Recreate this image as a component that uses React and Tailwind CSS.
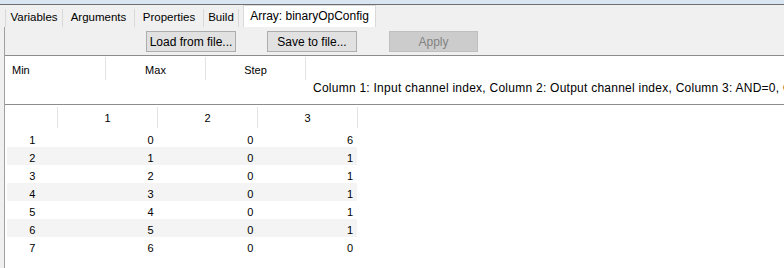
import React from 'react';

const tabs = [
    { label: 'Variables', w: 'w-[57px]' },
    { label: 'Arguments', w: 'w-[72px]' },
    { label: 'Properties', w: 'w-[69px]' },
    { label: 'Build', w: 'w-[35px]' },
];

const rows = [
    [0, 0, 6],
    [1, 0, 1],
    [2, 0, 1],
    [3, 0, 1],
    [4, 0, 1],
    [5, 0, 1],
    [6, 0, 0],
];

const App = () => {
    return (
        <div className="w-[784px] h-[268px] overflow-hidden bg-[#f0f0f0] text-[11px] text-black font-['Liberation_Sans',Arial,sans-serif] flex flex-col">
            {/* window top edge */}
            <div className="h-[5px] shrink-0 bg-[#dae5f3] border-b border-[#6f6f6f]" />

            {/* tab strip */}
            <div className="h-[22px] shrink-0 flex items-end pl-[5px] text-[11.5px]">
                {tabs.map((t) => (
                    <div
                        key={t.label}
                        className={`${t.w} h-[18px] flex items-center justify-center border-l border-[#d9d9d9] bg-[#f0f0f0]`}
                    >
                        {t.label}
                    </div>
                ))}
                <div className="w-[5px] h-[18px] border-l border-[#d9d9d9]" />
                <div className="w-[133px] h-[22px] self-end flex items-center justify-center bg-white border-x border-t border-[#d9d9d9] pb-[2px] text-[12px]">
                    Array: binaryOpConfig
                </div>
            </div>

            {/* panel */}
            <div className="flex-1 ml-[4px] border-l border-[#a0a0a0] flex flex-col">
                {/* button row */}
                <div className="h-[29px] shrink-0 flex items-start pt-[4px] border-b border-[#8c8c8c]">
                    <button className="ml-[141px] w-[90px] h-[21px] bg-[#e1e1e1] border border-[#adadad] text-[12px]">
                        Load from file...
                    </button>
                    <button className="ml-[31px] w-[90px] h-[21px] bg-[#e1e1e1] border border-[#adadad] text-[12px]">
                        Save to file...
                    </button>
                    <button className="ml-[32px] w-[89px] h-[21px] bg-[#cccccc] border border-[#bfbfbf] text-[#838383] text-[12px]">
                        Apply
                    </button>
                </div>

                {/* range header */}
                <div className="h-[49px] shrink-0 bg-white border-b border-[#8c8c8c] flex flex-col">
                    <div className="h-[26px] pt-[1px] flex">
                        <div className="w-[101px] h-[23px] flex items-center pl-[7px] pt-[4px] border-r border-[#e3e3e3]">Min</div>
                        <div className="w-[100px] h-[23px] flex items-center justify-center pt-[4px] border-r border-[#e3e3e3]">Max</div>
                        <div className="w-[100px] h-[23px] flex items-center justify-center pt-[4px] border-r border-[#e3e3e3]">Step</div>
                    </div>
                    <div className="h-[22px] pl-[308px] whitespace-nowrap overflow-hidden text-[12px] tracking-[0.25px] leading-[13px]">
                        Column 1: Input channel index, Column 2: Output channel index, Column 3: AND=0, OR=1, XOR=2
                    </div>
                </div>

                {/* array table */}
                <div className="bg-white flex-1">
                    <div className="h-[24px] flex items-start pt-[2px]">
                        <div className="w-[53px] h-[21px] border-r border-[#e3e3e3]" />
                        {[1, 2, 3].map((n) => (
                            <div key={n} className="w-[100px] h-[21px] flex items-center justify-center pt-[2px] border-r border-[#e3e3e3]">
                                {n}
                            </div>
                        ))}
                    </div>
                    {rows.map((r, i) => (
                        <div
                            key={i}
                            className={`ml-[2px] w-[350px] h-[18px] flex items-center pt-[5px] ${i % 2 === 1 ? 'bg-[#f4f4f4]' : 'bg-white'}`}
                        >
                            <div className="w-[51px] text-center">{i + 1}</div>
                            {r.map((v, j) => (
                                <div key={j} className="w-[100px] text-right pr-[4px]">{v}</div>
                            ))}
                        </div>
                    ))}
                </div>
            </div>
        </div>
    );
};

export default App;
